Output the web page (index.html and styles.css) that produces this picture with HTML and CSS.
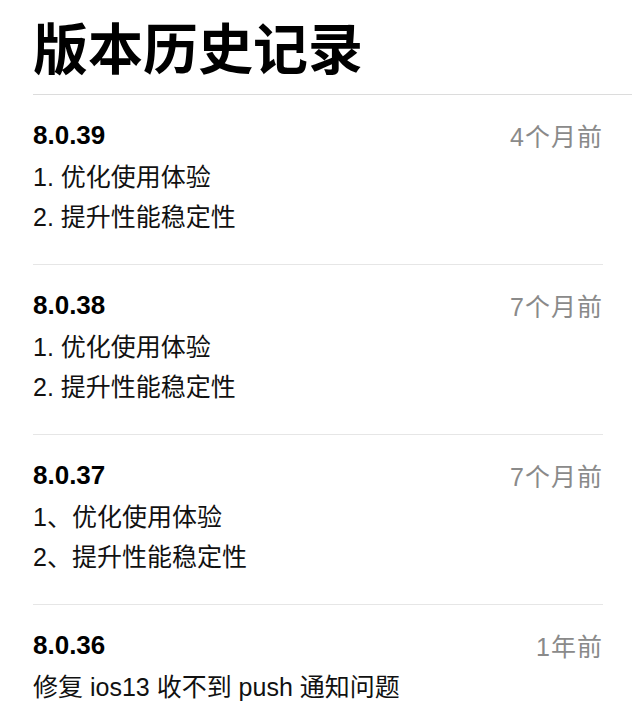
FILE: index.html
```html
<!DOCTYPE html>
<html lang="zh-CN">
<head>
<meta charset="utf-8">
<link rel="stylesheet" href="styles.css">
</head>
<body>
<div class="page">
  <h1 class="title">版本历史记录</h1>
  <ul class="list">
    <li class="entry">
      <div class="head"><span class="ver">8.0.39</span><span class="time">4个月前</span></div>
      <div class="notes">
        <p class="note">1. 优化使用体验</p>
        <p class="note">2. 提升性能稳定性</p>
      </div>
    </li>
    <li class="entry">
      <div class="head"><span class="ver">8.0.38</span><span class="time">7个月前</span></div>
      <div class="notes">
        <p class="note">1. 优化使用体验</p>
        <p class="note">2. 提升性能稳定性</p>
      </div>
    </li>
    <li class="entry">
      <div class="head"><span class="ver">8.0.37</span><span class="time">7个月前</span></div>
      <div class="notes">
        <p class="note">1、优化使用体验</p>
        <p class="note">2、提升性能稳定性</p>
      </div>
    </li>
    <li class="entry">
      <div class="head"><span class="ver">8.0.36</span><span class="time">1年前</span></div>
      <div class="notes">
        <p class="note">修复 ios13 收不到 push 通知问题</p>
      </div>
    </li>
  </ul>
</div>
</body>
</html>
```
FILE: styles.css
```css
html, body {
  margin: 0;
  padding: 0;
  background: #fff;
}
body {
  font-family: "Liberation Sans", "Noto Sans CJK SC", sans-serif;
  color: #111;
}
.page {
  padding-left: 33px;
}
.title {
  margin: 0;
  padding-top: 10px;
  padding-bottom: 14px;
  height: 70px;
  line-height: 70px;
  font-family: "Noto Sans CJK SC", sans-serif;
  font-size: 55px;
  font-weight: 700;
  color: #000;
  border-bottom: 1px solid #dcdcdc;
}
.list {
  list-style: none;
  margin: 0;
  padding: 0;
  margin-right: 29px;
}
.entry {
  padding: 20px 0 27px;
  border-bottom: 1px solid #e6e6e6;
}
.entry:last-child {
  border-bottom: none;
}
.head {
  display: flex;
  justify-content: space-between;
  align-items: center;
  height: 40px;
}
.ver {
  font-size: 26px;
  font-weight: 700;
  color: #000;
}
.time {
  font-size: 25px;
  color: #8a8a8a;
  letter-spacing: 1px;
}
.notes {
  padding-top: 2px;
}
.note {
  margin: 0;
  height: 40px;
  line-height: 40px;
  font-size: 25px;
  color: #111;
}
```
